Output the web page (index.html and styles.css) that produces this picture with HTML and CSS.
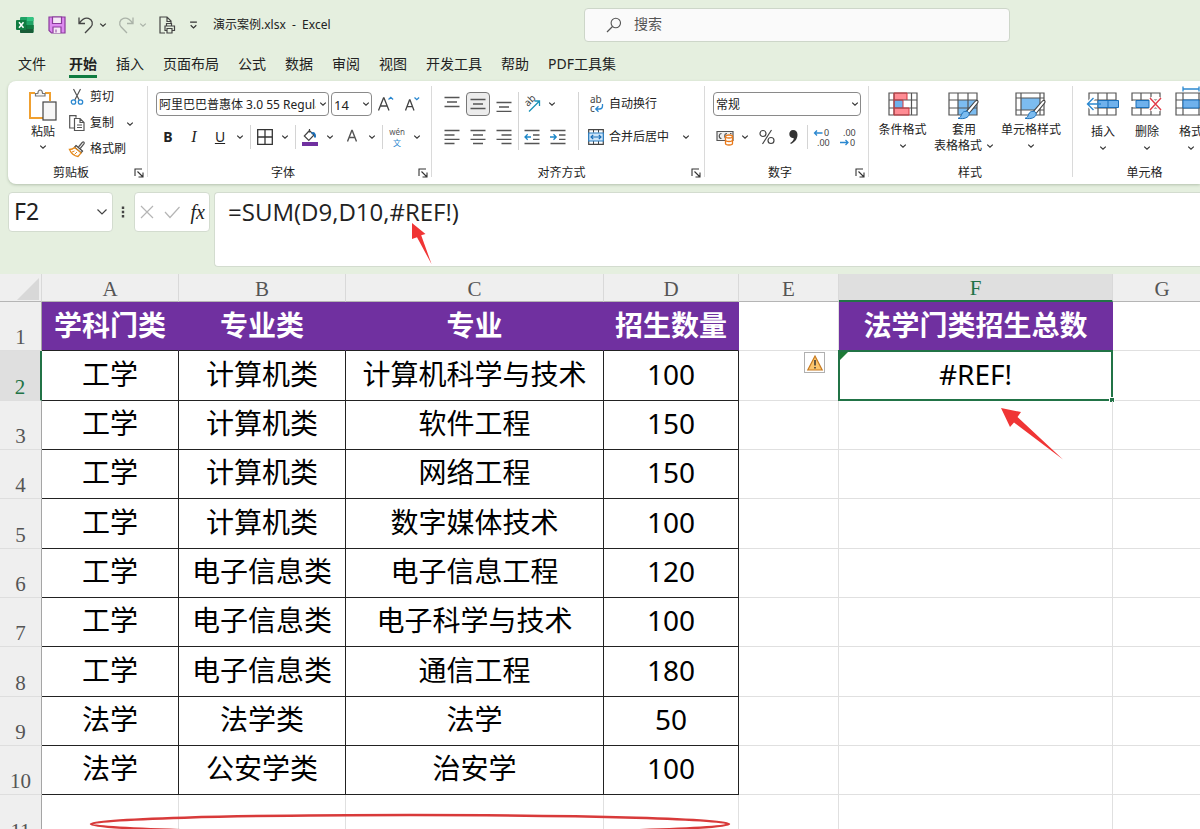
FILE: index.html
```html
<!DOCTYPE html>
<html lang="zh-CN">
<head>
<meta charset="utf-8">
<meta name="viewport" content="width=device-width, initial-scale=1">
<title>演示案例.xlsx - Excel</title>
<link rel="stylesheet" href="styles.css">
</head>
<body>
<svg class="defs" aria-hidden="true">
  <symbol id="chev" viewBox="0 0 8 8"><path d="M1.2 2.6 4 5.2 6.8 2.6" fill="none" stroke="currentColor" stroke-width="1.2"/></symbol>
  <symbol id="launch" viewBox="0 0 10 10"><path d="M1 8V1h7M3.5 3.5 8.5 8.5M9 4.5V9H4.5" fill="none" stroke="#333" stroke-width="1.1"/></symbol>
  <symbol id="brush" viewBox="0 0 22 22"><path d="M20.5 1.5c1 .8.6 2-.4 3.200L12 14.500 9.500 12.300 17.500 3c1-1.200 2-2.100 3-1.500z" fill="#fff" stroke="#444" stroke-width="1.100"/><path d="M9.300 12.300c1.900.1 3.200 1.600 2.800 3.200-.6 3-5 5-11 3.800 2.300-.7 2.800-1.800 3.500-3.900.7-2.100 2.400-3.200 4.700-3.100z" fill="#7cbcf0" stroke="#1b6fb8" stroke-width="1"/></symbol>
</svg>

<header class="titlebar">
  <div class="quick">
    <svg class="logo" viewBox="0 0 18 18" width="18" height="18" role="img" aria-label="Excel"><rect x="4" y="1" width="13.500" height="16" rx="1.200" fill="#21a366"/><path d="M11 1h5.300a1.200 1.200 0 0 1 1.200 1.200V5H11z" fill="#33c481"/><path d="M4 9h13.500v6.800a1.200 1.200 0 0 1-1.200 1.200H5.200A1.200 1.200 0 0 1 4 15.800z" fill="#185c37"/><path d="M11 9h6.500v4H11z" fill="#107c41"/><rect x="0" y="4" width="10.500" height="10" rx="1" fill="#107c41"/><path d="m3 6.300 4.500 5.400M7.500 6.300 3 11.700" stroke="#fff" stroke-width="1.500"/></svg>
    <button class="qbtn save" aria-label="保存"><svg viewBox="0 0 18 18" width="18" height="18"><path d="M1 1h16v16H3.500L1 14.500z" fill="#dd8af0" stroke="#8a3a9c" stroke-width="1.200"/><path d="M4.500 1h9v6.500h-9zM5 17v-6h8v6" fill="#f4e8f5" stroke="#8a3a9c" stroke-width="1.200"/><path d="M8 13.500v3" stroke="#8a3a9c"/></svg></button>
    <button class="qbtn" aria-label="撤消"><svg viewBox="0 0 18 18" width="18" height="18"><path d="M2 1.500v6h6M2.300 7.200C5 3.300 8 1.300 11.500 2.300c4 1.200 5 5.700 2.300 8.700L8 17" fill="none" stroke="#444" stroke-width="1.300"/></svg></button>
    <button class="chevbtn" aria-label="撤消列表"><svg class="chev"><use href="#chev"/></svg></button>
    <button class="qbtn dim" aria-label="恢复"><svg viewBox="0 0 18 18" width="18" height="18"><path d="M16 1.500v6h-6M15.700 7.200C13 3.300 10 1.300 6.500 2.300c-4 1.200-5 5.700-2.300 8.700L10 17" fill="none" stroke="#aab2a8" stroke-width="1.300"/></svg></button>
    <button class="chevbtn dim" aria-label="恢复列表"><svg class="chev"><use href="#chev"/></svg></button>
    <button class="qbtn preview" aria-label="打印预览"><svg viewBox="0 0 18 18" width="18" height="18"><path d="M7 17H2V1h7l4 4v2M9 1v4.500h4" fill="none" stroke="#444" stroke-width="1.200"/><path d="M8.500 10V7.500h5V10M8.500 14.500H7V10h9.500v4.500H14M9 12.500h5V17H9z" fill="#e5efdf" stroke="#444" stroke-width="1.200"/></svg></button>
    <button class="chevbtn more" aria-label="自定义快速访问工具栏"><svg viewBox="0 0 8 8" width="9" height="9"><path d="M1 1h6M1.500 3.800 4 6.200l2.500-2.400" fill="none" stroke="#333"/></svg></button>
    <span class="doc">演示案例.xlsx&nbsp; -&nbsp; Excel</span>
  </div>
  <label class="search"><svg viewBox="0 0 16 16" width="16" height="16"><circle cx="9.800" cy="6" r="4.700" fill="none" stroke="#555" stroke-width="1.100"/><path d="M6.500 9.500 1 15" stroke="#555" stroke-width="1.200"/></svg><input type="text" placeholder="搜索" aria-label="搜索"></label>
</header>

<nav class="tabs">
  <button class="tab file">文件</button><button class="tab active">开始</button><button class="tab">插入</button><button class="tab">页面布局</button><button class="tab">公式</button><button class="tab">数据</button><button class="tab">审阅</button><button class="tab">视图</button><button class="tab">开发工具</button><button class="tab">帮助</button><button class="tab">PDF工具集</button>
</nav>

<section class="ribbon">
  <div class="group g-clip">
    <div class="body clip">
      <button class="big paste"><svg viewBox="0 0 30 32" width="30" height="32"><path d="M7 4H2v25h14M17 4h5v8" fill="none" stroke="#f0a030" stroke-width="2"/><path d="M7.500 7V4.500h2.300C10 2 11 1 12.200 1s2.200 1 2.400 3.500H17V7z" fill="#f5f5f5" stroke="#777" stroke-width="1.200"/><rect x="15" y="13" width="13" height="18" fill="#f7f7f7" stroke="#444" stroke-width="1.200"/></svg><span>粘贴</span><svg class="chev"><use href="#chev"/></svg></button>
      <div class="stack">
        <button class="line"><svg viewBox="0 0 16 16" width="16" height="16"><path d="m4.500 0 5.700 11M11.500 0 5.800 11" fill="none" stroke="#555" stroke-width="1.200"/><circle cx="4.500" cy="13" r="2.200" fill="none" stroke="#2b88d0" stroke-width="1.300"/><circle cx="11.500" cy="13" r="2.200" fill="none" stroke="#2b88d0" stroke-width="1.300"/></svg>剪切</button>
        <div class="split"><button class="line"><svg viewBox="0 0 16 16" width="16" height="16"><path d="M5 13H.700V.7H7v2M5.500 3.500H11l4 4v8H5.500zM11 3.500v4h4" fill="none" stroke="#555" stroke-width="1.200"/><path d="M8 10h5M8 12.500h5" stroke="#555"/></svg>复制</button><button class="chevbtn" aria-label="复制选项"><svg class="chev"><use href="#chev"/></svg></button></div>
        <button class="line"><svg viewBox="0 0 16 16" width="16" height="16"><path d="m9.500 6 3.700-4.500c1.300-1.200 2.800 0 1.700 1.500L11.200 7.500" fill="#fff" stroke="#555" stroke-width="1.200"/><path d="m7 4.500 6.500 5.500-1.500 1.800L5.500 6.200z" fill="#fff" stroke="#444" stroke-width="1.200"/><path d="M5.500 6.500C4 8 2.500 8.500.5 8.500c1.500 3.500 5 6.500 8.500 7 1-1 2.300-2.300 3-3.700z" fill="#fff" stroke="#e58a1c" stroke-width="1.300"/><path d="m3 11 2.500-1M5.500 13.500 8 11" stroke="#e58a1c"/></svg>格式刷</button>
      </div>
    </div>
    <div class="caption"><span>剪贴板</span><button class="launcher" aria-label="剪贴板设置"><svg width="10" height="10"><use href="#launch"/></svg></button></div>
  </div>

  <div class="group g-font">
    <div class="body rows">
      <div class="row">
        <span class="combo font"><select aria-label="字体"><option>阿里巴巴普惠体 3.0 55 Regular</option></select><svg class="chev"><use href="#chev"/></svg></span>
        <span class="combo size"><select aria-label="字号"><option>14</option></select><svg class="chev"><use href="#chev"/></svg></span>
        <button class="tool" aria-label="增大字号"><svg viewBox="0 0 18 18" width="18" height="18"><path d="M1.500 15.500 6.500 3h.5l5 12.500M3.500 11h6.500" fill="none" stroke="#444" stroke-width="1.300"/><path d="m11.500 4.500 2.300-2.200 2.300 2.200" fill="none" stroke="#2b88d0" stroke-width="1.300"/></svg></button>
        <button class="tool" aria-label="减小字号"><svg viewBox="0 0 18 18" width="18" height="18"><path d="M2.500 15.500 6.500 5h.5l4 10.500M4 11.700h5.500" fill="none" stroke="#444" stroke-width="1.300"/><path d="m11.500 2.500 2.300 2.200 2.300-2.200" fill="none" stroke="#2b88d0" stroke-width="1.300"/></svg></button>
      </div>
      <div class="row">
        <button class="tool bold">B</button><button class="tool ital">I</button>
        <div class="split"><button class="tool under">U</button><button class="chevbtn" aria-label="下划线选项"><svg class="chev"><use href="#chev"/></svg></button></div>
        <i class="sep"></i>
        <div class="split"><button class="tool" aria-label="边框"><svg viewBox="0 0 16 16" width="16" height="16"><path d="M.7.700h14.600v14.600H.7zM8 .7v14.600M.7 8h14.600" fill="none" stroke="#333" stroke-width="1.300"/></svg></button><button class="chevbtn" aria-label="边框选项"><svg class="chev"><use href="#chev"/></svg></button></div>
        <i class="sep"></i>
        <div class="split"><button class="tool" aria-label="填充颜色"><svg viewBox="0 0 18 18" width="18" height="18"><path d="M8.500 1v3.500M8.500 2.500 3.300 8l4.500 4.500L13 7z" fill="none" stroke="#444" stroke-width="1.200"/><path d="M10.500 5.500c2-1 4-.5 3.500 4" fill="none" stroke="#1b6fb8" stroke-width="2"/><rect x="1" y="14" width="16" height="4" fill="#7030a0"/></svg></button><button class="chevbtn" aria-label="填充选项"><svg class="chev"><use href="#chev"/></svg></button></div>
        <div class="split"><button class="tool" aria-label="字体颜色"><svg viewBox="0 0 18 18" width="18" height="18"><path d="M4.500 13.500 8.800 2.500h.4l4.300 11M6 9.500h6" fill="none" stroke="#555" stroke-width="1.400"/></svg></button><button class="chevbtn" aria-label="颜色选项"><svg class="chev"><use href="#chev"/></svg></button></div>
        <i class="sep"></i>
        <div class="split"><button class="tool wen"><span>wén</span><b>文</b></button><button class="chevbtn" aria-label="拼音选项"><svg class="chev"><use href="#chev"/></svg></button></div>
      </div>
    </div>
    <div class="caption"><span>字体</span><button class="launcher" aria-label="字体设置"><svg width="10" height="10"><use href="#launch"/></svg></button></div>
  </div>

  <div class="group g-align">
    <div class="body clusters">
      <div class="rows">
        <div class="row"><button class="tool" aria-label="顶端对齐"><svg viewBox="0 0 16 16" width="16" height="16"><path d="M.5 1.500h15M3 6h10M.5 10.500h15" stroke="#555" stroke-width="1.300"/></svg></button><button class="tool on" aria-label="垂直居中"><svg viewBox="0 0 16 16" width="16" height="16"><path d="M.5 3.500h15M3 8h10M.5 12.500h15" stroke="#555" stroke-width="1.300"/></svg></button><button class="tool" aria-label="底端对齐"><svg viewBox="0 0 16 16" width="16" height="16"><path d="M.5 6.500h15M3 11h10M.5 15.300h15" stroke="#555" stroke-width="1.300"/></svg></button></div>
        <div class="row"><button class="tool" aria-label="左对齐"><svg viewBox="0 0 16 16" width="16" height="16"><path d="M.5 1.500h15M.5 6h10M.5 10.300h15M.5 14.500h10" stroke="#555" stroke-width="1.300"/></svg></button><button class="tool" aria-label="居中"><svg viewBox="0 0 16 16" width="16" height="16"><path d="M.5 1.500h15M3 6h10M.5 10.300h15M3 14.500h10" stroke="#555" stroke-width="1.300"/></svg></button><button class="tool" aria-label="右对齐"><svg viewBox="0 0 16 16" width="16" height="16"><path d="M.5 1.500h15M5.500 6h10M.5 10.300h15M5.500 14.500h10" stroke="#555" stroke-width="1.300"/></svg></button></div>
      </div>
      <div class="rows cluster mid">
        <div class="row"><div class="split"><button class="tool" aria-label="方向"><svg viewBox="0 0 22 22" width="22" height="22"><text x="0" y="0" transform="translate(7 14) rotate(-45)" class="orient">ab</text><path d="m8 18.500 10-10M13.500 8h5v5" fill="none" stroke="#1b93b8" stroke-width="1.300"/></svg></button><button class="chevbtn" aria-label="方向选项"><svg class="chev"><use href="#chev"/></svg></button></div></div>
        <div class="row"><button class="tool" aria-label="减少缩进"><svg viewBox="0 0 16 16" width="16" height="16"><path d="M.5 1.500h15M9 6h6.500M9 10.300h6.500M.5 14.500h15" stroke="#555" stroke-width="1.300"/><path d="M7 8H1m2.700-2.700L1 8l2.700 2.700" fill="none" stroke="#1b86c8" stroke-width="1.300"/></svg></button><button class="tool" aria-label="增加缩进"><svg viewBox="0 0 16 16" width="16" height="16"><path d="M.5 1.500h15M9 6h6.500M9 10.300h6.500M.5 14.500h15" stroke="#555" stroke-width="1.300"/><path d="M0 8h6M3.500 5.300 6.200 8l-2.700 2.700" fill="none" stroke="#1b86c8" stroke-width="1.300"/></svg></button></div>
      </div>
      <div class="rows cluster wide">
        <div class="row"><button class="line"><svg viewBox="0 0 16 22" width="16" height="22"><text x="2" y="10" class="abc">ab</text><text x="2" y="19" class="abc">c</text><path d="M14.500 11v2c0 2-1 3-3 3H8M10.500 13.300 7.800 16l2.700 2.700" fill="none" stroke="#2b88d0" stroke-width="1.300"/></svg>自动换行</button></div>
        <div class="row"><button class="line"><svg viewBox="0 0 16 16" width="16" height="16"><path d="M.7.700h14.600v14.600H.7z" fill="#fff" stroke="#444" stroke-width="1.200"/><path d="M5.500.7v3M10.500.7v3M5.500 12v3.300M10.500 12v3.300" stroke="#444"/><path d="M.7 4h14.600v8H.7z" fill="#cfe6f8" stroke="#2b7fc4" stroke-width="1.200"/><path d="M3 8h10M5.200 5.800 3 8l2.200 2.200M10.800 5.800 13 8l-2.200 2.200" fill="none" stroke="#1b6fb8" stroke-width="1.200"/></svg>合并后居中</button><button class="chevbtn" aria-label="合并选项"><svg class="chev"><use href="#chev"/></svg></button></div>
      </div>
    </div>
    <div class="caption"><span>对齐方式</span><button class="launcher" aria-label="对齐设置"><svg width="10" height="10"><use href="#launch"/></svg></button></div>
  </div>

  <div class="group g-num">
    <div class="body rows">
      <div class="row"><span class="combo fmt"><select aria-label="数字格式"><option>常规</option></select><svg class="chev"><use href="#chev"/></svg></span></div>
      <div class="row">
        <div class="split"><button class="tool" aria-label="会计数字格式"><svg viewBox="0 0 18 18" width="18" height="18"><path d="M1 3.500h16v9H1z" fill="#eee" stroke="#555" stroke-width="1.200"/><path d="M5.500 5.500c-3 0-3 5 0 5M11 5.500c-3 0-3 5 0 5M14 5.500h1.500" fill="none" stroke="#555" stroke-width="1.200"/><path d="M9.500 8.500v7c0 2 7 2 7 0v-7" fill="#fff" stroke="#e8791a" stroke-width="1.300"/><path d="M9.500 12c0 2 7 2 7 0" fill="none" stroke="#e8791a" stroke-width="1.300"/><ellipse cx="13" cy="8.500" rx="3.500" ry="1.500" fill="#fff" stroke="#e8791a" stroke-width="1.300"/></svg></button><button class="chevbtn" aria-label="货币选项"><svg class="chev"><use href="#chev"/></svg></button></div>
        <button class="tool" aria-label="百分比"><svg viewBox="0 0 16 16" width="16" height="16"><circle cx="4" cy="4.500" r="3" fill="none" stroke="#444" stroke-width="1.200"/><circle cx="12" cy="11.500" r="3" fill="none" stroke="#444" stroke-width="1.200"/><path d="M12.500 1 3.500 15" stroke="#444" stroke-width="1.200"/></svg></button>
        <button class="tool" aria-label="千位分隔"><svg viewBox="0 0 16 16" width="16" height="16"><path d="M8 1c2.800 0 4.500 2 4.500 4.700 0 4-2.500 7.300-6.600 9.300l-.7-1.100c2.200-1.400 3.500-2.900 3.700-4.700C6.300 9.500 4.300 7.700 4.300 5.100 4.300 2.700 5.800 1 8 1z" fill="#333"/></svg></button>
        <i class="sep"></i>
        <button class="tool" aria-label="增加小数位"><svg viewBox="0 0 20 24" width="20" height="24"><text x="12" y="11" class="dec">0</text><text x="5" y="21" class="dec">.00</text><path d="M10.500 8h-8M5 5.500 2.500 8 5 10.500" fill="none" stroke="#2b88d0" stroke-width="1.300"/></svg></button>
        <button class="tool" aria-label="减少小数位"><svg viewBox="0 0 20 24" width="20" height="24"><text x="5" y="11" class="dec">.00</text><text x="12" y="21" class="dec">0</text><path d="M2 17.500h8M7.500 15l2.500 2.500L7.500 20" fill="none" stroke="#2b88d0" stroke-width="1.300"/></svg></button>
      </div>
    </div>
    <div class="caption"><span>数字</span><button class="launcher" aria-label="数字设置"><svg width="10" height="10"><use href="#launch"/></svg></button></div>
  </div>

  <div class="group g-style">
    <div class="body bigs">
      <button class="big w1"><svg viewBox="0 0 30 24" width="30" height="24"><path d="M1 1h28v22H1z" fill="#fff"/><path d="M6 1h13v7H6zM6 16h15v7H6z" fill="#ff8c94"/><path d="M6 8h9v8H6z" fill="#6fb1ec"/><path d="M1 1h28v22H1zM1 8h28M1 16h28M6 1v22M23.500 1v22" fill="none" stroke="#555" stroke-width="1.200"/><path d="M6 1h13v7M6 16h15v7H6V1M6 8h9v8" fill="none" stroke="#d13840" stroke-width="1"/></svg><span>条件格式</span><svg class="chev"><use href="#chev"/></svg></button>
      <button class="big w2"><svg viewBox="0 0 32 28" width="32" height="28" class="tall"><path d="M1 1h28v22H1z" fill="#fff"/><path d="M10 8h19v15H10z" fill="#7cbcf0"/><path d="M1 1h28v22H1zM1 8h28M1 16h28M10 1v22M20 1v22" fill="none" stroke="#555" stroke-width="1.200"/><use href="#brush" x="9" y="7" width="22" height="22"/></svg><span>套用</span><span>表格格式 <svg class="chev"><use href="#chev"/></svg></span></button>
      <button class="big w2"><svg viewBox="0 0 32 28" width="32" height="28" class="tall"><path d="M1 1h28v22H1z" fill="#fff"/><path d="M6 6h19v12H6z" fill="#7cbcf0"/><path d="M1 1h28v22H1zM1 6h28M1 18h28M6 1v22M25 1v22" fill="none" stroke="#555" stroke-width="1.200"/><use href="#brush" x="9" y="7" width="22" height="22"/></svg><span>单元格样式</span><svg class="chev"><use href="#chev"/></svg></button>
    </div>
    <div class="caption"><span>样式</span></div>
  </div>

  <div class="group g-cell">
    <div class="body bigs low">
      <button class="big w3"><svg viewBox="0 0 34 24" width="34" height="24"><path d="M3 1h27v22H3zM3 8h27M3 16h27M12 1v22M21 1v22" fill="#fff" stroke="#555" stroke-width="1.200"/><path d="M12 8.500h20.500v7H12z" fill="#6fb1ec" stroke="#1b6fb8"/><path d="M22 8.500v7" stroke="#1b6fb8"/><path d="M11 12H2M7.500 6 1.500 12l6 6" fill="none" stroke="#fff" stroke-width="4"/><path d="M15 12H2M7.500 6 1.500 12l6 6" fill="none" stroke="#2b88d0" stroke-width="1.400"/></svg><span>插入</span><svg class="chev"><use href="#chev"/></svg></button>
      <button class="big w3"><svg viewBox="0 0 32 24" width="32" height="24"><path d="M1 1h28v22H1zM1 8h28M1 16h28M10 1v7M20 1v7M10 16v7M20 16v7" fill="#fff" stroke="#555" stroke-width="1.200"/><path d="M0 9h31v6H0z" fill="#fff"/><path d="M5 8.500h13v7H5z" fill="#6fb1ec" stroke="#1b6fb8"/><path d="m19 6 11 12M30 6 19 18" stroke="#fff" stroke-width="4"/><path d="m19 6 11 12M30 6 19 18" stroke="#e23b49" stroke-width="1.400"/></svg><span>删除</span><svg class="chev"><use href="#chev"/></svg></button>
      <button class="big w3"><svg viewBox="0 0 32 30" width="32" height="30" class="rise"><path d="M1 7h30v22H1zM1 14h30M1 22h30M8 7v22M24 7v22" fill="#fff" stroke="#555" stroke-width="1.200"/><path d="M8 14h16v8H8z" fill="#6fb1ec" stroke="#1b6fb8"/><path d="M8 3h16M8 .5v5M24 .5v5" stroke="#2b88d0" stroke-width="1.300"/></svg><span>格式</span><svg class="chev"><use href="#chev"/></svg></button>
    </div>
    <div class="caption"><span>单元格</span></div>
  </div>
</section>

<section class="formulabar">
  <label class="namebox"><input type="text" value="F2" aria-label="名称框"><svg viewBox="0 0 12 12" width="12" height="12"><path d="m1.500 3.500 4.500 4.500 4.500-4.500" fill="none" stroke="#444" stroke-width="1.200"/></svg></label>
  <svg class="dots" viewBox="0 0 4 14" width="4" height="14"><path d="M.8 1.500h2.400v2.400H.8zM.8 5.800h2.400v2.400H.8zM.8 10.100h2.400v2.400H.8z" fill="#444"/></svg>
  <div class="fxbox">
    <button aria-label="取消"><svg viewBox="0 0 14 14" width="14" height="14"><path d="m1 1 12 12M13 1 1 13" stroke="#b5b5b5" stroke-width="1.200"/></svg></button>
    <button aria-label="输入"><svg viewBox="0 0 16 14" width="16" height="14"><path d="m1 7 5 5.500L15.500 2" fill="none" stroke="#b5b5b5" stroke-width="1.200"/></svg></button>
    <button class="fx">fx</button>
  </div>
  <div class="formula">
    <textarea aria-label="编辑栏" spellcheck="false">=SUM(D9,D10,#REF!)</textarea>
    <svg class="arrow1" viewBox="0 0 22 42" width="22" height="42"><path d="M1 0 14.500 11l-4.300 1.200L20.500 41 6 14.300 1 16z" fill="#f03535"/></svg>
  </div>
</section>

<main class="sheet">
  <table>
    <colgroup><col class="c0"><col class="ca"><col class="cb"><col class="cc"><col class="cd"><col class="ce"><col class="cf"><col></colgroup>
    <thead><tr><th class="corner"><svg viewBox="0 0 22 22" width="22" height="22"><path d="M22 0v22H0z" fill="#d8d8d8"/></svg></th><th scope="col">A</th><th scope="col">B</th><th scope="col">C</th><th scope="col">D</th><th scope="col">E</th><th scope="col" class="sel">F</th><th scope="col">G</th></tr></thead>
    <tbody>
      <tr><th scope="row">1</th><td class="h">学科门类</td><td class="h">专业类</td><td class="h">专业</td><td class="h">招生数量</td><td></td><td class="h">法学门类招生总数</td><td></td></tr>
      <tr><th scope="row" class="sel">2</th><td class="d">工学</td><td class="d">计算机类</td><td class="d">计算机科学与技术</td><td class="d">100</td><td class="host"><button class="warn" aria-label="错误检查"><svg viewBox="0 0 16 16" width="16" height="16"><path d="M8 1 15.200 15H.8z" fill="#fbc56d" stroke="#c77b21" stroke-width="1.200"/><path d="M8 5v5.500M8 12v1.600" stroke="#333" stroke-width="1.500"/></svg></button></td><td class="host current">#REF!<i class="flag"></i><i class="frame"></i><i class="handle"></i></td><td></td></tr>
      <tr><th scope="row">3</th><td class="d">工学</td><td class="d">计算机类</td><td class="d">软件工程</td><td class="d">150</td><td></td><td class="host"><svg class="arrow2" viewBox="0 0 63 52" width="63" height="52"><path d="M0 0 20 4l-3.500 5L62 51.500 13 14.500 9 19z" fill="#f03535"/></svg></td><td></td></tr>
      <tr><th scope="row">4</th><td class="d">工学</td><td class="d">计算机类</td><td class="d">网络工程</td><td class="d">150</td><td></td><td></td><td></td></tr>
      <tr><th scope="row">5</th><td class="d">工学</td><td class="d">计算机类</td><td class="d">数字媒体技术</td><td class="d">100</td><td></td><td></td><td></td></tr>
      <tr><th scope="row">6</th><td class="d">工学</td><td class="d">电子信息类</td><td class="d">电子信息工程</td><td class="d">120</td><td></td><td></td><td></td></tr>
      <tr><th scope="row">7</th><td class="d">工学</td><td class="d">电子信息类</td><td class="d">电子科学与技术</td><td class="d">100</td><td></td><td></td><td></td></tr>
      <tr><th scope="row">8</th><td class="d">工学</td><td class="d">电子信息类</td><td class="d">通信工程</td><td class="d">180</td><td></td><td></td><td></td></tr>
      <tr><th scope="row">9</th><td class="d">法学</td><td class="d">法学类</td><td class="d">法学</td><td class="d">50</td><td></td><td></td><td></td></tr>
      <tr><th scope="row">10</th><td class="d">法学</td><td class="d">公安学类</td><td class="d">治安学</td><td class="d">100</td><td></td><td></td><td></td></tr>
      <tr><th scope="row">11</th><td class="host"><svg class="oval" viewBox="0 0 642 22" width="642" height="22"><ellipse cx="321" cy="11" rx="319" ry="9" fill="none" stroke="#d83a3a" stroke-width="2.500"/></svg></td><td></td><td></td><td></td><td></td><td></td><td></td></tr>
    </tbody>
  </table>
</main>
</body>
</html>
```

FILE: styles.css
```css
* { box-sizing: border-box; }
body {
  margin: 0;
  height: 100vh;
  overflow: hidden;
  display: flex;
  flex-direction: column;
  background: #e5efdf;
  color: #222;
  font: 12px/16px "Noto Sans", "Noto Sans CJK SC", sans-serif;
}
button, input, select, textarea { font: inherit; color: inherit; }
button { border: 0; padding: 0; background: none; }
svg { flex: none; display: block; overflow: visible; }
.defs { width: 0; height: 0; position: absolute; }
.chev { width: 8px; height: 8px; color: #333; }

/* title bar */
.titlebar { display: flex; align-items: center; height: 50px; flex: none; }
.quick { flex: 0 0 584px; display: flex; align-items: center; padding-left: 16px; }
.qbtn { width: 18px; display: grid; place-items: center; }
.save { margin: 0 11px 0 14px; }
.chevbtn { width: 16px; height: 24px; display: grid; place-items: center; flex: none; }
.quick .chevbtn { margin-right: 6px; }
.dim .chev { color: #aab2a8; }
.preview { margin: 0 9px 0 1px; }
.doc { margin-left: 6px; white-space: nowrap; }
.search {
  flex: 0 1 426px; height: 34px; display: flex; align-items: center; gap: 12px;
  padding: 0 21px; background: #fafafa; border: 1px solid #cdd6c9; border-radius: 4px;
  font-size: 14px;
}
.search input { flex: 1; min-width: 0; border: 0; padding: 0 0 2px; background: none; outline: 0; }
.search input::placeholder { color: #555; opacity: 1; }

/* tabs */
.tabs { display: flex; gap: 19px; padding-left: 18px; height: 31px; flex: none; }
.tab { height: 28px; padding: 3px 0 0; font-size: 14px; line-height: 22px; white-space: nowrap; border-bottom: 3px solid transparent; }
.file { margin-right: 4px; }
.active { font-weight: 700; border-bottom-color: #107c41; }

/* ribbon */
.ribbon {
  display: flex; flex: none; height: 103px; margin-left: 8px; overflow: hidden;
  background: #fff; border-radius: 8px 0 0 8px; box-shadow: 0 1px 3px #b4c2ae;
}
.group { flex: none; display: flex; flex-direction: column; position: relative; padding-left: 8px; }
.group::after { content: ""; position: absolute; right: 0; top: 5px; bottom: 7px; width: 1px; background: #dadada; }
.g-clip { width: 140px; }
.g-font { width: 284px; }
.g-align { width: 273px; }
.g-num { width: 164px; }
.g-style { width: 204px; }
.g-cell { width: 145px; }
.body { flex: 1; }
.caption { display: flex; height: 22px; align-items: center; margin-left: -8px; padding: 0 2px 0 0; }
.caption span { flex: 1; text-align: center; }
.launcher { width: 12px; }
.clip { display: flex; padding: 3px 0 0 6px; }
.stack { display: flex; flex-direction: column; }
.line { display: flex; align-items: center; gap: 5px; height: 26px; white-space: nowrap; }
.stack .line { padding-left: 5px; }
.stack .chevbtn { margin: 1px 0 0 8px; }
.split { display: flex; align-items: center; }
.big { display: flex; flex-direction: column; align-items: center; white-space: nowrap; }
.big span { display: flex; align-items: center; gap: 4px; }
.paste { width: 42px; padding-top: 5px; }
.paste span { margin: 3px 0; }
.rows { display: flex; flex-direction: column; padding-top: 11px; gap: 9px; }
.row { display: flex; align-items: center; gap: 2px; height: 24px; }
.tool { width: 24px; height: 24px; display: grid; place-items: center; flex: none; }
.on { background: #ececec; border: 1px solid #777; border-radius: 4px; }
.sep { width: 1px; height: 24px; background: #d4d4d4; flex: none; }
.combo { position: relative; display: flex; height: 24px; }
.combo select {
  appearance: none; width: 100%; padding: 1px 12px 0 2px; background: #fff;
  border: 1px solid #8a8a8a; border-radius: 4px; overflow: hidden;
}
.combo .chev { position: absolute; right: 2px; top: 8px; pointer-events: none; }
.font { width: 173px; }
.size { width: 41px; font-size: 13px; }
.fmt { width: 148px; }
.bold { font-size: 14px; font-weight: 700; }
.ital { font: italic 16px "Liberation Serif", serif; }
.under { font-size: 14px; text-decoration: underline; }
.wen { display: flex; flex-direction: column; align-items: center; justify-content: center; font-size: 8px; line-height: 11px; color: #555; }
.wen b { font-weight: 400; color: #2b88d0; }
.clusters { display: flex; }
.clusters .rows { margin-right: 2px; }
.cluster { padding-left: 2px; position: relative; }
.cluster::before { content: ""; position: absolute; left: 0; top: 11px; height: 58px; width: 1px; background: #d4d4d4; }
.mid { width: 58px; }
.wide { padding-left: 10px; }
.wide .chevbtn { margin-left: 7px; }
.orient, .dec, .abc { font-family: "Noto Sans", sans-serif; fill: #444; }
.orient { font-size: 10px; }
.abc { font-size: 10px; }
.dec { font-size: 9px; }
.bigs { display: flex; align-items: flex-start; padding-top: 11px; }
.big .tall { margin-bottom: -4px; }
.big .rise { margin-top: -6px; }
.bigs span { margin-top: 6px; height: 16px; }
.bigs span + span { margin-top: 0; }
.bigs > .big > .chev { margin-top: 4px; }
.low span { margin-top: 8px; }
.w1 { width: 51px; }
.w2 { width: 62px; margin-left: 5px; }
.w3 { width: 44px; }

/* formula bar */
.formulabar { display: flex; align-items: flex-start; flex: none; padding: 8px 0 7px 8px; font-size: 24px; }
.namebox, .fxbox, .formula { background: #fff; border: 1px solid #d3dccf; border-radius: 4px; }
.namebox { width: 105px; height: 40px; display: flex; align-items: center; padding: 0 4px 0 5px; font-size: 23px; }
.namebox input { flex: 1; min-width: 0; border: 0; padding: 0 0 2px; outline: 0; background: none; }
.dots { margin: 13px 9px 0 8px; }
.fxbox { width: 76px; height: 40px; display: flex; align-items: center; justify-content: space-between; padding: 0 4px 0 5px; }
.fx { font: italic 20px "Liberation Serif", serif; }
.formula { flex: 1; height: 75px; margin-left: 4px; position: relative; border-right: 0; border-radius: 4px 0 0 4px; }
.formula textarea { display: block; width: 100%; height: 100%; border: 0; padding: 3px 13px; background: none; outline: 0; resize: none; line-height: 32px; font-family: "Open Sans", sans-serif; }
.arrow1 { position: absolute; left: 196px; top: 30px; }

/* worksheet */
.sheet { flex: 1; min-height: 0; overflow: hidden; background: #fff; }
table { width: calc(100% + 12px); table-layout: fixed; border-collapse: separate; border-spacing: 0; }
.c0 { width: 42px; }
.ca { width: 137px; }
.cb { width: 167px; }
.cc { width: 258px; }
.cd { width: 135px; }
.ce { width: 100px; }
.cf { width: 274px; }
th { padding: 0; font: 21px/24px "Liberation Serif", "DejaVu Serif", serif; color: #555; background: #efefef; border-right: 1px solid #d9d9d9; }
thead th { height: 28px; padding: 3px 0 0; line-height: 23px; border-bottom: 1px solid #b5b5b5; }
tbody th { vertical-align: bottom; padding-bottom: 1px; border-right-color: #a5a5a5; border-bottom: 1px solid #dedede; }
thead .corner { padding: 0; }
.corner svg { margin: 3px 2px 0 auto; }
.sel { background: #dfdfdf; color: #217346; }
thead .sel { padding-top: 2px; border-bottom: 2px solid #217346; }
tbody .sel { border-right: 2px solid #217346; }
td { height: 49px; padding: 0 0 4px; text-align: center; border-right: 1px solid #e0e0e0; border-bottom: 1px solid #e0e0e0; font-size: 28px; line-height: 40px; color: #000; white-space: nowrap; }
tbody tr:nth-child(3n + 2) td { height: 50px; }
.h { padding-bottom: 2px; background: #7030a0; color: #fff; font-weight: 700; border-color: #7030a0 #7030a0 #222; }
.d { border-color: #222; }
.host { position: relative; }
.warn { position: absolute; right: 13px; top: 1px; width: 21px; height: 21px; display: grid; place-items: center; background: #fff; border: 1px solid #b0b0b0; }
.frame { position: absolute; inset: -1px; border: 2px solid #217346; }
.flag { position: absolute; left: 1px; top: 1px; width: 8px; height: 8px; background: #1c7a35; clip-path: polygon(0 0, 100% 0, 0 100%); }
.handle { position: absolute; right: -2px; bottom: -2px; width: 4px; height: 4px; background: #217346; outline: 1px solid #fff; }
.arrow2 { position: absolute; left: 162px; top: 7px; }
.oval { position: absolute; left: 47px; top: 18px; z-index: 1; }
```
